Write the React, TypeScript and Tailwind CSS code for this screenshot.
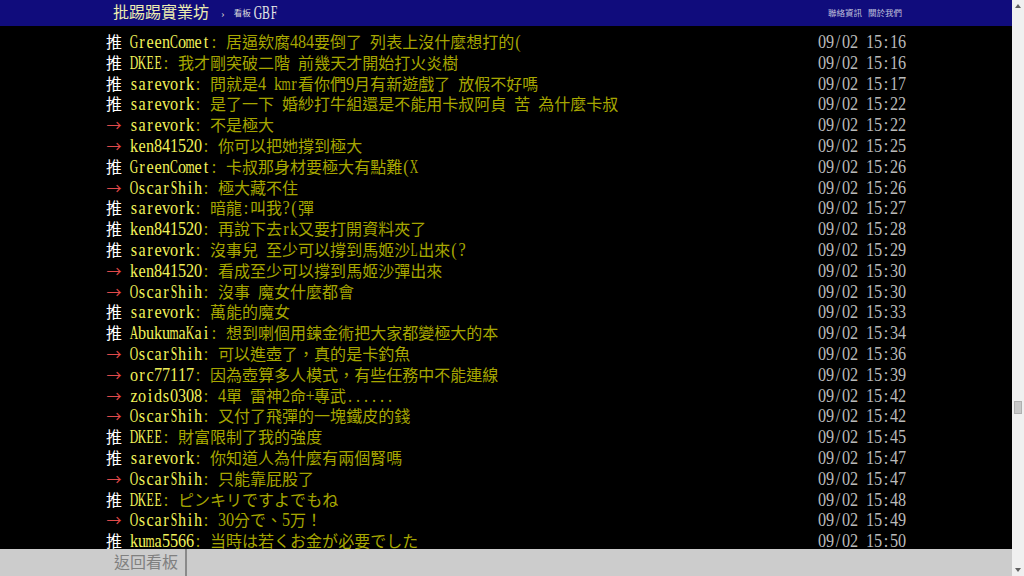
import React from 'react';

type Push = { tag: '推' | '→'; user: string; text: string; time: string };

const pushes: Push[] = [
  { tag: '推', user: 'GreenComet', text: '居逼欸腐484要倒了 列表上沒什麼想打的(', time: '09/02 15:16' },
  { tag: '推', user: 'DKEE', text: '我才剛突破二階 前幾天才開始打火炎樹', time: '09/02 15:16' },
  { tag: '推', user: 'sarevork', text: '問就是4 kmr看你們9月有新遊戲了 放假不好嗎', time: '09/02 15:17' },
  { tag: '推', user: 'sarevork', text: '是了一下 婚紗打牛組還是不能用卡叔阿貞 苦 為什麼卡叔', time: '09/02 15:22' },
  { tag: '→', user: 'sarevork', text: '不是極大', time: '09/02 15:22' },
  { tag: '→', user: 'ken841520', text: '你可以把她撐到極大', time: '09/02 15:25' },
  { tag: '推', user: 'GreenComet', text: '卡叔那身材要極大有點難(X', time: '09/02 15:26' },
  { tag: '→', user: 'OscarShih', text: '極大藏不住', time: '09/02 15:26' },
  { tag: '推', user: 'sarevork', text: '暗龍:叫我?(彈', time: '09/02 15:27' },
  { tag: '推', user: 'ken841520', text: '再說下去rk又要打開資料夾了', time: '09/02 15:28' },
  { tag: '推', user: 'sarevork', text: '沒事兒 至少可以撐到馬姬沙L出來(?', time: '09/02 15:29' },
  { tag: '→', user: 'ken841520', text: '看成至少可以撐到馬姬沙彈出來', time: '09/02 15:30' },
  { tag: '→', user: 'OscarShih', text: '沒事 魔女什麼都會', time: '09/02 15:30' },
  { tag: '推', user: 'sarevork', text: '萬能的魔女', time: '09/02 15:33' },
  { tag: '推', user: 'AbukumaKai', text: '想到喇個用鍊金術把大家都變極大的本', time: '09/02 15:34' },
  { tag: '→', user: 'OscarShih', text: '可以進壺了，真的是卡釣魚', time: '09/02 15:36' },
  { tag: '→', user: 'orc77117', text: '因為壺算多人模式，有些任務中不能連線', time: '09/02 15:39' },
  { tag: '→', user: 'zoids0308', text: '4單 雷神2命+專武......', time: '09/02 15:42' },
  { tag: '→', user: 'OscarShih', text: '又付了飛彈的一塊鐵皮的錢', time: '09/02 15:42' },
  { tag: '推', user: 'DKEE', text: '財富限制了我的強度', time: '09/02 15:45' },
  { tag: '推', user: 'sarevork', text: '你知道人為什麼有兩個腎嗎', time: '09/02 15:47' },
  { tag: '→', user: 'OscarShih', text: '只能靠屁股了', time: '09/02 15:47' },
  { tag: '推', user: 'DKEE', text: 'ピンキリですよでもね', time: '09/02 15:48' },
  { tag: '→', user: 'OscarShih', text: '30分で、5万！', time: '09/02 15:49' },
  { tag: '推', user: 'kuma5566', text: '当時は若くお金が必要でした', time: '09/02 15:50' },
];

const WIDE = 'ABCDEFGHKLNOPQRSTUVXYZ&@%mw';
const XWIDE = 'MW';

// half-width chars sit in fixed 8px cells, like the BBS terminal font
const Cells: React.FC<{ text: string }> = ({ text }) => (
  <>
    {Array.from(text).map((ch, i) => {
      if (ch.charCodeAt(0) > 127) return ch;
      const cls = XWIDE.includes(ch)
        ? 'inline-flex w-[8px] justify-center text-[18px] leading-none scale-x-[0.5]'
        : WIDE.includes(ch)
          ? 'inline-flex w-[8px] justify-center text-[18px] leading-none scale-x-[0.65]'
          : 'inline-flex w-[8px] justify-center text-[18px] leading-none scale-x-[0.9]';
      return (
        <span key={i} className={cls}>
          {ch === ' ' ? '\u00a0' : ch}
        </span>
      );
    })}
  </>
);

const Row: React.FC<{ p: Push }> = ({ p }) => (
  <div className="flex h-[20.8px] items-baseline justify-between whitespace-nowrap leading-[20.8px]">
    <div>
      {p.tag === '推' ? (
        <span className="inline-flex w-[16px] justify-center leading-none text-white">推</span>
      ) : (
        <span className="inline-flex w-[16px] justify-center text-[15px] font-['Noto_Sans_CJK_TC',sans-serif] leading-none text-[#e04a4a]">→</span>
      )}
      <span className="inline-flex w-[8px]" />
      <span className="text-[#f2f25a]">
        <Cells text={p.user} />
      </span>
      <span className="text-[#a6a600]">
        <Cells text={': ' + p.text} />
      </span>
    </div>
    <span className="text-[#bbbbbb]">
      <Cells text={p.time} />
    </span>
  </div>
);

export default function App() {
  return (
    <div className="flex h-[576px] w-[1024px] overflow-hidden bg-black text-[16px] font-['Liberation_Serif','Noto_Sans_CJK_TC',serif]">
      <div className="flex flex-1 flex-col">
        {/* top bar */}
        <header className="h-[26px] shrink-0 bg-[#100c7c]">
          <div className="mx-auto flex h-full w-[800px] items-center pl-[7px] pr-[4px]">
            <span className="text-[16px] leading-none text-[#ececb0]">批踢踢實業坊</span>
            <span className="ml-[12px] text-[11px] leading-none text-[#cccccc]">›</span>
            <span className="ml-[9px] text-[8.5px] leading-none text-[#dddddd]">看板</span>
            <span className="ml-[3px] leading-none text-[#e6e6e6]">
              <Cells text="GBF" />
            </span>
            <div className="ml-auto flex gap-[6px] text-[8.5px] leading-none text-[#c0c0dc]">
              <span>聯絡資訊</span>
              <span>關於我們</span>
            </div>
          </div>
        </header>

        {/* push list */}
        <main className="flex-1 overflow-hidden pt-[7px]">
          <div className="mx-auto w-[800px]">
            {pushes.map((p, i) => (
              <Row key={i} p={p} />
            ))}
          </div>
        </main>

        {/* bottom bar */}
        <footer className="h-[27px] shrink-0 bg-[#cccccc]">
          <div className="mx-auto flex h-full w-[800px]">
            <div className="flex items-center border-r-2 border-[#8a8a8a] pl-[8px] pr-[7px] text-[16px] text-[#808080]">
              返回看板
            </div>
          </div>
        </footer>
      </div>

      {/* scrollbar */}
      <div className="flex w-[12px] flex-col bg-[#f0f0f0]">
        <div className="flex h-[12px] items-center justify-center">
          <svg width="6" height="4" viewBox="0 0 6 4">
            <polygon points="0,4 3,0 6,4" fill="#606060" />
          </svg>
        </div>
        <div className="ml-[2px] mt-[389px] h-[13px] w-[8px] border border-[#b0b0b0] bg-[#c8c8c8]" />
        <div className="flex-1" />
        <div className="flex h-[12px] items-center justify-center">
          <svg width="6" height="4" viewBox="0 0 6 4">
            <polygon points="0,0 6,0 3,4" fill="#606060" />
          </svg>
        </div>
      </div>
    </div>
  );
}
